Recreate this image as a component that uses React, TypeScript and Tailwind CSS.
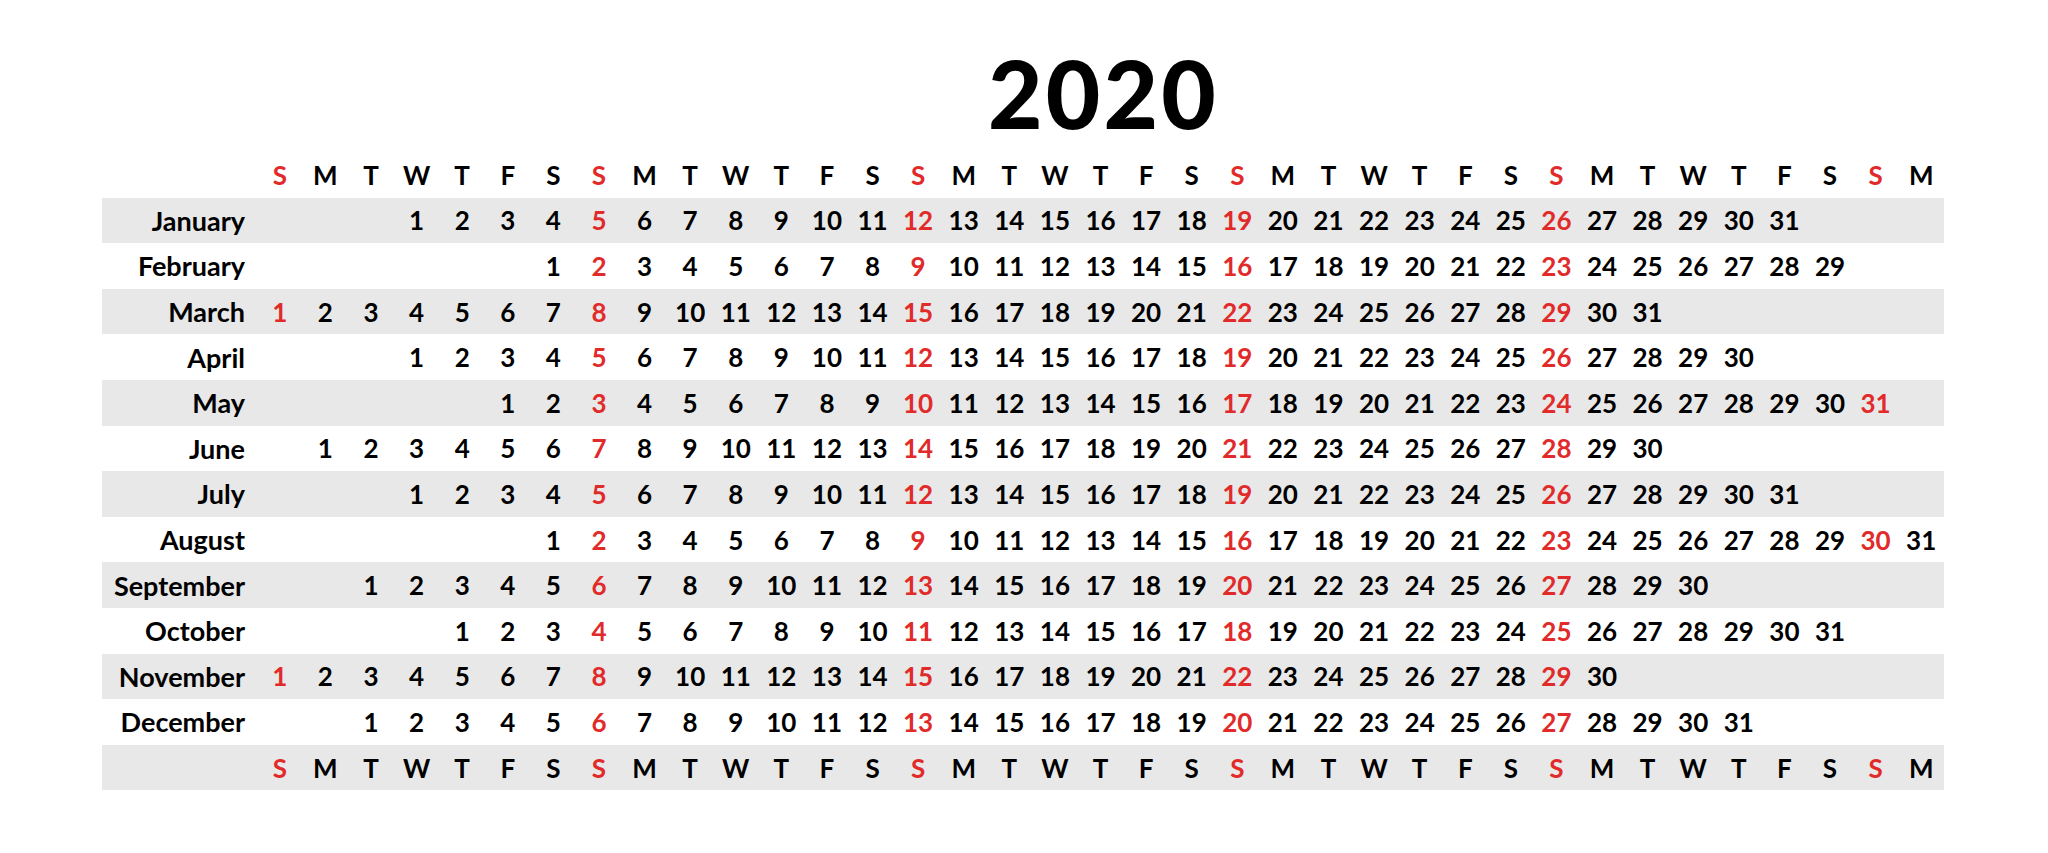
import React from 'react'

const MONTHS = [
  'January', 'February', 'March', 'April', 'May', 'June',
  'July', 'August', 'September', 'October', 'November', 'December',
]
const WEEK = ['S', 'M', 'T', 'W', 'T', 'F', 'S']
const COLS = 37
const YEAR = 2020

const rowGrid = 'grid grid-cols-[155px_repeat(37,45.6px)] h-[45.6px] items-center'

function buildMonth(m: number) {
  const offset = new Date(YEAR, m, 1).getDay()
  const days = new Date(YEAR, m + 1, 0).getDate()
  const cells: (number | null)[] = []
  for (let i = 0; i < COLS; i++) {
    const d = i - offset + 1
    cells.push(d >= 1 && d <= days ? d : null)
  }
  return cells
}

function WeekRow({ gray }: { gray?: boolean }) {
  return (
    <div className={`${rowGrid} ${gray ? 'bg-[#e8e8e8]' : ''}`}>
      <div />
      {Array.from({ length: COLS }).map((_, i) => (
        <div
          key={i}
          className={`text-center text-[26px] font-bold leading-none ${i % 7 === 0 ? 'text-[#e12a2a]' : 'text-black'}`}
        >
          {WEEK[i % 7]}
        </div>
      ))}
    </div>
  )
}

export default function App() {
  return (
    <div className="w-[2048px] h-[853px] bg-white overflow-hidden" style={{ fontFamily: 'Lato, "Noto Sans", sans-serif' }}>
      <div className="ml-[102px] w-[1842px]">
        {/* Year title, centred over the day columns */}
        <div className="pl-[161px] pt-[46px] h-[152px]">
          <h1 className="text-center text-[94px] font-black leading-none tracking-[0.035em] text-black">{YEAR}</h1>
        </div>

        <WeekRow />

        {MONTHS.map((name, m) => (
          <div key={name} className={`${rowGrid} ${m % 2 === 0 ? 'bg-[#e8e8e8]' : ''}`}>
            <div className="pr-[12px] text-right text-[27px] font-bold leading-none text-black">{name}</div>
            {buildMonth(m).map((d, i) => (
              <div
                key={i}
                className={`text-center text-[26px] font-bold leading-none ${i % 7 === 0 ? 'text-[#e12a2a]' : 'text-black'}`}
              >
                {d ?? ''}
              </div>
            ))}
          </div>
        ))}

        <WeekRow gray />
      </div>
    </div>
  )
}
